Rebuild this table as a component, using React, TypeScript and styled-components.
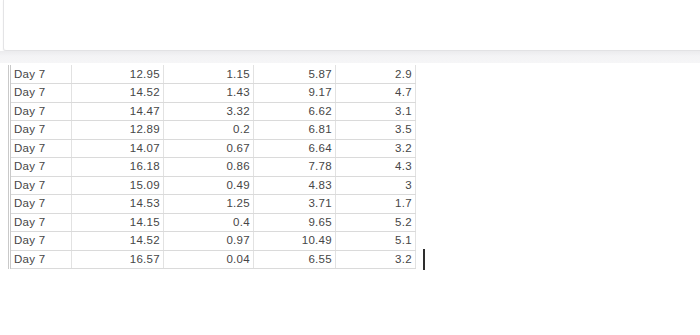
import { createGlobalStyle } from 'styled-components';
import styled from 'styled-components';

const GlobalStyle = createGlobalStyle`
  html, body {
    margin: 0;
    padding: 0;
    background: #ffffff;
  }
  body {
    font-family: "Liberation Sans", Arial, sans-serif;
  }
`

const Page = styled.div`
  width: 700px;
  height: 335px;
  overflow: hidden;
  background: #ffffff;
  display: flex;
  flex-direction: column;
`

const TopCard = styled.div`
  height: 50px;
  margin-left: 3px;
  background: #ffffff;
  border-left: 1px solid #e4e4e6;
  border-bottom: 1px solid #e2e2e4;
  border-bottom-left-radius: 3px;
  box-shadow: 0 1px 2px rgba(0, 0, 0, 0.06);
`

const Band = styled.div`
  height: 12px;
  background: linear-gradient(#ebebed, #f3f3f5 40%, #f6f6f7);
`

const Sheet = styled.div`
  position: relative;
  padding: 2px 0 0 8px;
`

const Grid = styled.table`
  border-collapse: collapse;
  table-layout: fixed;
  border-left: 3px double #c9c9c9;
  font-size: 11.5px;
  color: #464646;
`

const Cell = styled.td<{ $w: number; $left?: boolean }>`
  width: ${p => p.$w}px;
  height: 18.5px;
  padding: 0 3px 0 3px;
  box-sizing: border-box;
  text-align: ${p => (p.$left ? 'left' : 'right')};
  border-right: 1px solid #e2e2e2;
  border-bottom: 1px solid #dadada;
  white-space: nowrap;
  line-height: 17px;
  letter-spacing: 0.3px;
`

const Caret = styled.div`
  position: absolute;
  left: 423px;
  top: 186px;
  width: 2px;
  height: 21px;
  background: #2e2e2e;
`

const widths = [62, 92, 90, 82, 80];

const rows: string[][] = [
  ['Day 7', '12.95', '1.15', '5.87', '2.9'],
  ['Day 7', '14.52', '1.43', '9.17', '4.7'],
  ['Day 7', '14.47', '3.32', '6.62', '3.1'],
  ['Day 7', '12.89', '0.2', '6.81', '3.5'],
  ['Day 7', '14.07', '0.67', '6.64', '3.2'],
  ['Day 7', '16.18', '0.86', '7.78', '4.3'],
  ['Day 7', '15.09', '0.49', '4.83', '3'],
  ['Day 7', '14.53', '1.25', '3.71', '1.7'],
  ['Day 7', '14.15', '0.4', '9.65', '5.2'],
  ['Day 7', '14.52', '0.97', '10.49', '5.1'],
  ['Day 7', '16.57', '0.04', '6.55', '3.2'],
];

export default function App() {
  return (
    <Page>
      <GlobalStyle />
      <TopCard />
      <Band />
      <Sheet>
        <Grid>
          <tbody>
            {rows.map((r, i) => (
              <tr key={i}>
                {r.map((v, j) => (
                  <Cell key={j} $w={widths[j]} $left={j === 0}>
                    {v}
                  </Cell>
                ))}
              </tr>
            ))}
          </tbody>
        </Grid>
        <Caret />
      </Sheet>
    </Page>
  );
}
